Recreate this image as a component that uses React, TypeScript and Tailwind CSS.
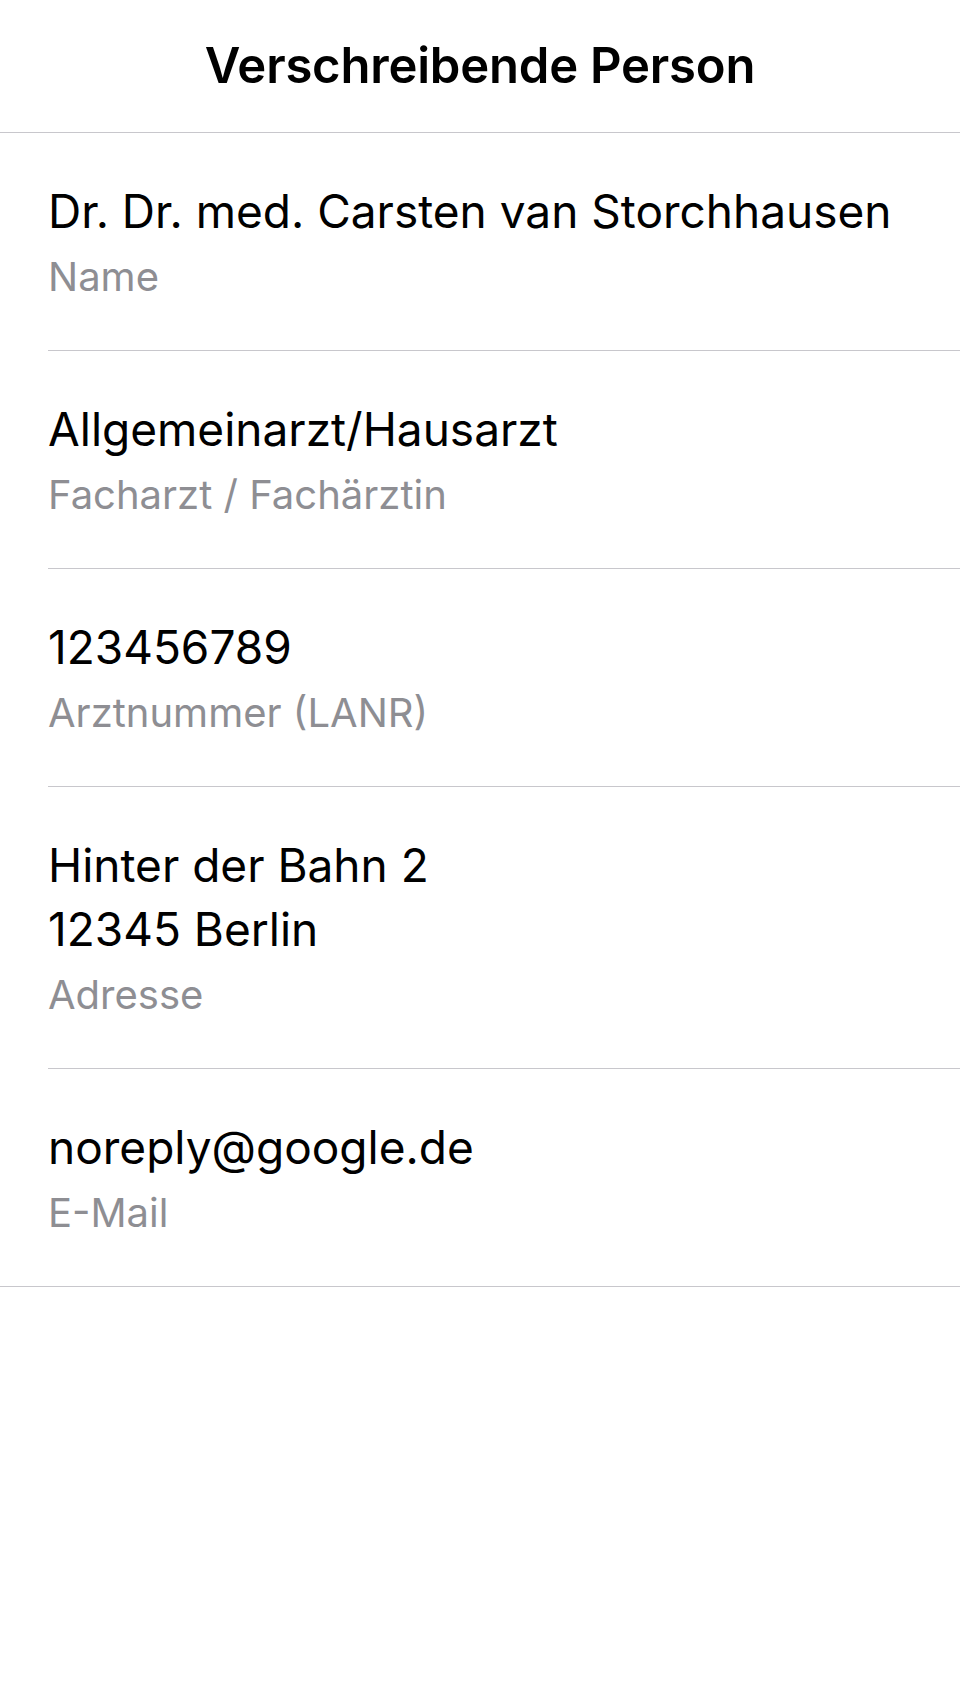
const rows = [
  { value: ['Dr. Dr. med. Carsten van Storchhausen'], label: 'Name' },
  { value: ['Allgemeinarzt/Hausarzt'], label: 'Facharzt / Fachärztin' },
  { value: ['123456789'], label: 'Arztnummer (LANR)' },
  { value: ['Hinter der Bahn 2', '12345 Berlin'], label: 'Adresse' },
  { value: ['noreply@google.de'], label: 'E-Mail' },
]

export default function App() {
  return (
    <div className="min-h-[1704px] bg-white font-['Inter',sans-serif] text-black">
      {/* Navigationsleiste */}
      <header className="h-[133px] flex items-center justify-center border-b border-[#c8c7cc] pb-[1px]">
        <h1 className="text-[49px] font-semibold tracking-[-0.2px]">Verschreibende Person</h1>
      </header>

      <ul>
        {rows.map((r, i) => {
          const last = i === rows.length - 1
          return (
            <li key={r.label} className={`pl-[48px] ${last ? 'border-b border-[#c8c7cc]' : ''}`}>
              <div className={`pt-[46px] pb-[49px] ${last ? '' : 'border-b border-[#c8c7cc]'}`}>
                {r.value.map(line => (
                  <p key={line} className="text-[46px] leading-[64px]">{line}</p>
                ))}
                <p className="text-[40px] leading-[48px] text-[#8e8e93] mt-[10px]">{r.label}</p>
              </div>
            </li>
          )
        })}
      </ul>
    </div>
  )
}
